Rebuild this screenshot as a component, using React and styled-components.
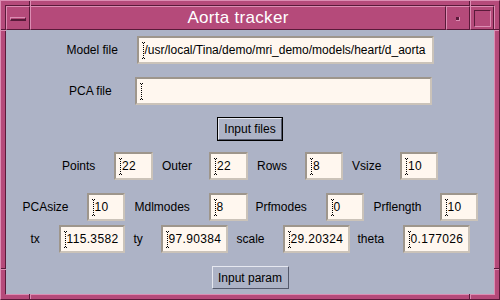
import React from 'react';
import styled, { createGlobalStyle } from 'styled-components';

const Global = createGlobalStyle`
  html, body { margin: 0; padding: 0; background: #adb3c6; }
  body { font-family: "Liberation Sans", Arial, sans-serif; }
`;

const PINK = '#b54a7a';
const LIGHT = '#dc8db3';
const DARK = '#5a1a3a';
const BG = '#adb3c6';

const Window = styled.div`
  position: relative;
  box-sizing: border-box;
  width: 500px;
  height: 300px;
  background: ${PINK};
  border-top: 1px solid ${LIGHT};
  border-left: 1px solid ${LIGHT};
  border-right: 1px solid ${DARK};
  border-bottom: 1px solid ${DARK};
  padding: 4px;
`;

const Inner = styled.div`
  box-sizing: border-box;
  height: 100%;
  display: flex;
  flex-direction: column;
  border-top: 1px solid ${DARK};
  border-left: 1px solid ${DARK};
  border-right: 1px solid ${LIGHT};
  border-bottom: 1px solid ${LIGHT};
`;

const Notch = styled.div`
  position: absolute;
  background: ${LIGHT};
  box-shadow: ${(p) => (p.$v ? `-1px 0 0 ${DARK}` : `0 -1px 0 ${DARK}`)};
  ${(p) => (p.$v ? 'width: 1px; height: 5px;' : 'width: 5px; height: 1px;')}
`;

const TitleBar = styled.div`
  display: flex;
  height: 24px;
  flex: none;
`;

const TitlePart = styled.div`
  box-sizing: border-box;
  width: ${(p) => (p.$w ? `${p.$w}px` : 'auto')};
  flex: ${(p) => (p.$w ? 'none' : '1')};
  background: ${PINK};
  border-top: 1px solid ${LIGHT};
  border-left: 1px solid ${LIGHT};
  border-right: 1px solid ${DARK};
  border-bottom: 1px solid ${DARK};
  display: flex;
  align-items: center;
  justify-content: center;
`;

const Title = styled.span`
  color: #ffffff;
  font-size: 17px;
  letter-spacing: 0.3px;
`;

const MenuBar = styled.div`
  box-sizing: border-box;
  width: 16px;
  height: 4px;
  margin-top: 1px;
  border-top: 1px solid ${LIGHT};
  border-left: 1px solid ${LIGHT};
  border-right: 1px solid ${DARK};
  border-bottom: 2px solid ${DARK};
`;

const MinBox = styled.div`
  box-sizing: border-box;
  width: 4px;
  height: 4px;
  margin-top: 1px;
  background: ${DARK};
  border-right: 1px solid ${LIGHT};
  border-bottom: 1px solid ${LIGHT};
`;

const MaxBox = styled.div`
  box-sizing: border-box;
  width: 17px;
  height: 17px;
  border-top: 1px solid ${DARK};
  border-left: 1px solid ${DARK};
  border-right: 1px solid ${LIGHT};
  border-bottom: 1px solid ${LIGHT};
`;

const Content = styled.div`
  flex: 1;
  background: ${BG};
  display: flex;
  flex-direction: column;
  align-items: center;
`;

const Row = styled.div`
  display: flex;
  align-items: center;
  justify-content: center;
  margin-top: ${(p) => p.$mt}px;
  height: ${(p) => p.$h || 28}px;
`;

const Label = styled.div`
  box-sizing: border-box;
  width: ${(p) => p.$w}px;
  margin-left: ${(p) => p.$ml || 0}px;
  padding-left: ${(p) => p.$pl || 0}px;
  font-size: 12px;
  color: #000;
  white-space: nowrap;
`;

const Box = styled.div`
  box-sizing: border-box;
  width: ${(p) => p.$w}px;
  height: 28px;
  background: #fff7ef;
  border-top: 2px solid #9e968c;
  border-left: 2px solid #9e968c;
  border-right: 2px solid #cbc3b9;
  border-bottom: 2px solid #cbc3b9;
  display: flex;
  align-items: center;
  padding-left: 3px;
  overflow: hidden;
  white-space: nowrap;
  font-size: 12px;
  letter-spacing: ${(p) => (p.$tight ? 0 : 0.35)}px;
  color: #000;
`;

const CaretSvg = styled.svg`
  flex: none;
  width: 4px;
  height: 17px;
  margin-right: -1px;
`;

const Button = styled.div`
  box-sizing: border-box;
  width: ${(p) => p.$w}px;
  height: ${(p) => p.$h}px;
  margin-top: ${(p) => p.$mt}px;
  border: ${(p) => (p.$default ? '1px solid #000' : 'none')};
  font-size: 12px;
  color: #000;
  display: flex;
`;

const ButtonFace = styled.div`
  flex: 1;
  background: ${BG};
  border-top: 1px solid #e6e8f0;
  border-left: 1px solid #e6e8f0;
  border-right: 1px solid #555a6c;
  border-bottom: 1px solid #555a6c;
  display: flex;
  align-items: center;
  justify-content: center;
`;

const Caret = () => (
  <CaretSvg viewBox="0 0 4 17">
    <path d="M0 0.5h3M0 16.5h3" stroke="#000" strokeWidth="1" strokeDasharray="1 1" />
    <path d="M1.5 1v15" stroke="#000" strokeWidth="1" strokeDasharray="1 1" />
  </CaretSvg>
);

const Field = ({ w, value, tight }) => (
  <Box $w={w} $tight={tight}>
    <Caret />
    {value}
  </Box>
);

const rows = [
  {
    mt: 11,
    items: [
      ['Points', 52, '22', 39],
      ['Outer', 47, '22', 39],
      ['Rows', 48, '8', 38],
      ['Vsize', 48, '10', 38],
    ],
  },
  {
    mt: 13,
    items: [
      ['PCAsize', 64, '10', 38],
      ['Mdlmodes', 74, '8', 39, 10],
      ['Prfmodes', 70, '0', 38, 8],
      ['Prflength', 66, '10', 38, 10],
    ],
  },
  {
    mt: 4,
    items: [
      ['tx', 28, '115.3582', 66],
      ['ty', 27, '97.90384', 67],
      ['scale', 46, '29.20324', 67, 9],
      ['theta', 45, '0.177026', 67, 8],
    ],
  },
];

const App = () => (
  <>
    <Global />
    <Window>
      <Inner>
        <TitleBar>
          <TitlePart $w={24}>
            <MenuBar />
          </TitlePart>
          <TitlePart>
            <Title>Aorta tracker</Title>
          </TitlePart>
          <TitlePart $w={24}>
            <MinBox />
          </TitlePart>
          <TitlePart $w={24}>
            <MaxBox />
          </TitlePart>
        </TitleBar>
        <Content>
          <Row $mt={6}>
            <Label $w={70}>Model file</Label>
            <Field w={297} tight value="/usr/local/Tina/demo/mri_demo/models/heart/d_aorta" />
          </Row>
          <Row $mt={13}>
            <Label $w={67} $pl={1}>PCA file</Label>
            <Field w={297} value="" />
          </Row>
          <Button $w={66} $h={24} $mt={12} $default>
            <ButtonFace>Input files</ButtonFace>
          </Button>
          {rows.map((r, i) => (
            <Row key={i} $mt={r.mt}>
              {r.items.map(([label, lw, value, fw, ml], j) => (
                <React.Fragment key={label}>
                  <Label $w={lw} $ml={j === 0 ? 0 : ml || 9}>
                    {label}
                  </Label>
                  <Field w={fw} value={value} />
                </React.Fragment>
              ))}
            </Row>
          ))}
          <Button $w={77} $h={23} $mt={13}>
            <ButtonFace>Input param</ButtonFace>
          </Button>
        </Content>
      </Inner>
      <Notch $v style={{ left: 29, top: 0 }} />
      <Notch $v style={{ left: 469, top: 0 }} />
      <Notch $v style={{ left: 29, bottom: 0 }} />
      <Notch $v style={{ left: 469, bottom: 0 }} />
      <Notch style={{ left: 0, top: 29 }} />
      <Notch style={{ right: 0, top: 29 }} />
      <Notch style={{ left: 0, bottom: 29 }} />
      <Notch style={{ right: 0, bottom: 29 }} />
    </Window>
  </>
);

export default App;
